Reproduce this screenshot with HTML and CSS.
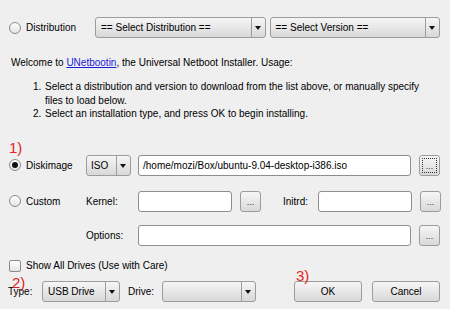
FILE: index.html
```html
<!DOCTYPE html>
<html>
  <head>
    <meta charset="utf-8">
    <title>UNetbootin</title>
    <link rel="stylesheet" href="styles.css">
  </head>
  <body>
    <div class="win">

      <div class="row top">
        <div class="lead"><span class="radio"></span>Distribution</div>
        <div class="combo wide"><span class="val">== Select Distribution ==</span><span class="arrow"></span></div>
        <div class="combo wide"><span class="val">== Select Version ==</span><span class="arrow"></span></div>
      </div>

      <p class="intro">Welcome to <a href="#">UNetbootin</a>, the Universal Netboot Installer. Usage:</p>
      <ol class="steps">
        <li><span class="num">1.</span><span>Select a distribution and version to download from the list above, or manually specify files to load below.</span></li>
        <li><span class="num">2.</span><span>Select an installation type, and press OK to begin installing.</span></li>
      </ol>

      <div class="row disk">
        <span class="note n1">1)</span>
        <div class="lead short"><span class="radio on"></span>Diskimage</div>
        <div class="combo iso"><span class="val">ISO</span><span class="arrow"></span></div>
        <div class="field grow">/home/mozi/Box/ubuntu-9.04-desktop-i386.iso</div>
        <div class="btn dots focus"><span>...</span></div>
      </div>

      <div class="row custom">
        <div class="lead short"><span class="radio"></span>Custom</div>
        <div class="lbl">Kernel:</div>
        <div class="field half"></div>
        <div class="btn dots">...</div>
        <div class="lbl initrd">Initrd:</div>
        <div class="field half"></div>
        <div class="btn dots">...</div>
      </div>

      <div class="row opts">
        <div class="lead short"></div>
        <div class="lbl">Options:</div>
        <div class="field grow"></div>
        <div class="btn dots">...</div>
      </div>

      <div class="row check">
        <span class="box"></span>Show All Drives (Use with Care)
      </div>

      <div class="row bottom">
        <span class="note n2">2)</span>
        <span class="note n3">3)</span>
        <div class="lbl type">Type:</div>
        <div class="combo usb"><span class="val">USB Drive</span><span class="arrow"></span></div>
        <div class="lbl drive">Drive:</div>
        <div class="combo drv"><span class="val"></span><span class="arrow"></span></div>
        <div class="spacer"></div>
        <div class="btn ok">OK</div>
        <div class="btn cancel">Cancel</div>
      </div>

    </div>
  </body>
</html>
```

FILE: styles.css
```css
html, body {
  margin: 0;
  padding: 0;
  background: #efefef;
}
.win {
  width: 450px;
  height: 309px;
  padding: 17px 10px 0 9px;
  box-sizing: border-box;
  font-family: "Liberation Sans", Arial, sans-serif;
  font-size: 10px;
  color: #000;
}
.row {
  display: flex;
  align-items: center;
  height: 21px;
  position: relative;
}
.lead {
  display: flex;
  align-items: center;
  width: 86px;
  flex: none;
}
.lead.short {
  width: 77px;
}
.radio {
  width: 10px;
  height: 10px;
  border: 1px solid #8a8a8a;
  border-radius: 50%;
  background: linear-gradient(#ffffff, #e4e4e4);
  margin-right: 5px;
  flex: none;
  position: relative;
}
.radio.on::after {
  content: "";
  position: absolute;
  left: 2px;
  top: 2px;
  width: 6px;
  height: 6px;
  border-radius: 50%;
  background: #111;
}

/* combo boxes */
.combo {
  display: flex;
  height: 21px;
  box-sizing: border-box;
  border: 1px solid #9c9c9c;
  border-radius: 3px;
  background: linear-gradient(#f6f6f6, #d8d8d8);
  flex: none;
}
.combo .val {
  flex: 1;
  display: flex;
  align-items: center;
  padding-left: 5px;
  white-space: nowrap;
  overflow: hidden;
}
.combo .arrow {
  width: 13px;
  border-left: 1px solid #9c9c9c;
  position: relative;
  flex: none;
}
.combo .arrow::after {
  content: "";
  position: absolute;
  left: 3px;
  top: 8px;
  border-left: 3px solid transparent;
  border-right: 3px solid transparent;
  border-top: 4px solid #111;
}
.combo.wide {
  flex: 1;
}
.combo.wide + .combo.wide {
  margin-left: 4px;
}
.combo.iso {
  width: 45px;
  margin-right: 7px;
}
.combo.iso .val {
  padding-left: 4px;
}
.combo.usb {
  width: 78px;
}
.combo.drv {
  width: 94px;
}

/* text fields */
.field {
  height: 21px;
  box-sizing: border-box;
  border: 1px solid #8e8e8e;
  border-radius: 3px;
  background: #fff;
  display: flex;
  align-items: center;
  padding-left: 4px;
  white-space: nowrap;
  overflow: hidden;
}
.field.grow {
  flex: 1;
}
.field.half {
  width: 94px;
  flex: none;
}

/* buttons */
.btn {
  height: 21px;
  box-sizing: border-box;
  border: 1px solid #9c9c9c;
  border-radius: 3px;
  background: linear-gradient(#f6f6f6, #d9d9d9);
  display: flex;
  align-items: center;
  justify-content: center;
  flex: none;
}
.btn.dots {
  width: 21px;
  margin-left: 8px;
  font-size: 9px;
  line-height: 1;
  color: #333;
  padding-top: 2px;
}
.btn.focus {
  padding: 2px;
}
.btn.focus span {
  width: 100%;
  height: 100%;
  box-sizing: border-box;
  border: 1px dotted #333;
  display: flex;
  align-items: center;
  justify-content: center;
  padding-top: 3px;
}
.btn.ok {
  width: 68px;
}
.btn.cancel {
  width: 68px;
  margin-left: 10px;
}

.lbl {
  width: 52px;
  flex: none;
}
.lbl.initrd {
  width: 35px;
  margin-left: 22px;
}
.lbl.type {
  width: 34px;
  margin-left: -1px;
}
.lbl.drive {
  width: 34px;
  margin-left: 8px;
}
.spacer {
  flex: 1;
}

/* text block */
.intro {
  margin: 18px 0 0 2px;
  line-height: 13px;
}
.intro a {
  color: #1a1ad8;
}
.steps {
  list-style: none;
  margin: 11px 0 0 24px;
  padding: 0;
  line-height: 13.5px;
  width: 398px;
}
.steps li {
  display: flex;
}
.steps .num {
  width: 12px;
  flex: none;
}

.row.disk {
  margin-top: 34px;
}
.row.custom {
  margin-top: 15px;
}
.row.opts {
  margin-top: 13px;
}
.row.check {
  height: 12px;
  margin-top: 14px;
}
.box {
  width: 10px;
  height: 10px;
  border: 1px solid #8a8a8a;
  border-radius: 2px;
  background: linear-gradient(#ffffff, #e4e4e4);
  margin-right: 5px;
}
.row.bottom {
  margin-top: 9px;
}

/* red annotations drawn over the form */
.note {
  position: absolute;
  color: #e02424;
  font-size: 15px;
  line-height: 1;
}
.n1 {
  left: 0;
  top: -15px;
}
.n2 {
  left: 3px;
  top: -6px;
}
.n3 {
  left: 287px;
  top: -13px;
}
```
